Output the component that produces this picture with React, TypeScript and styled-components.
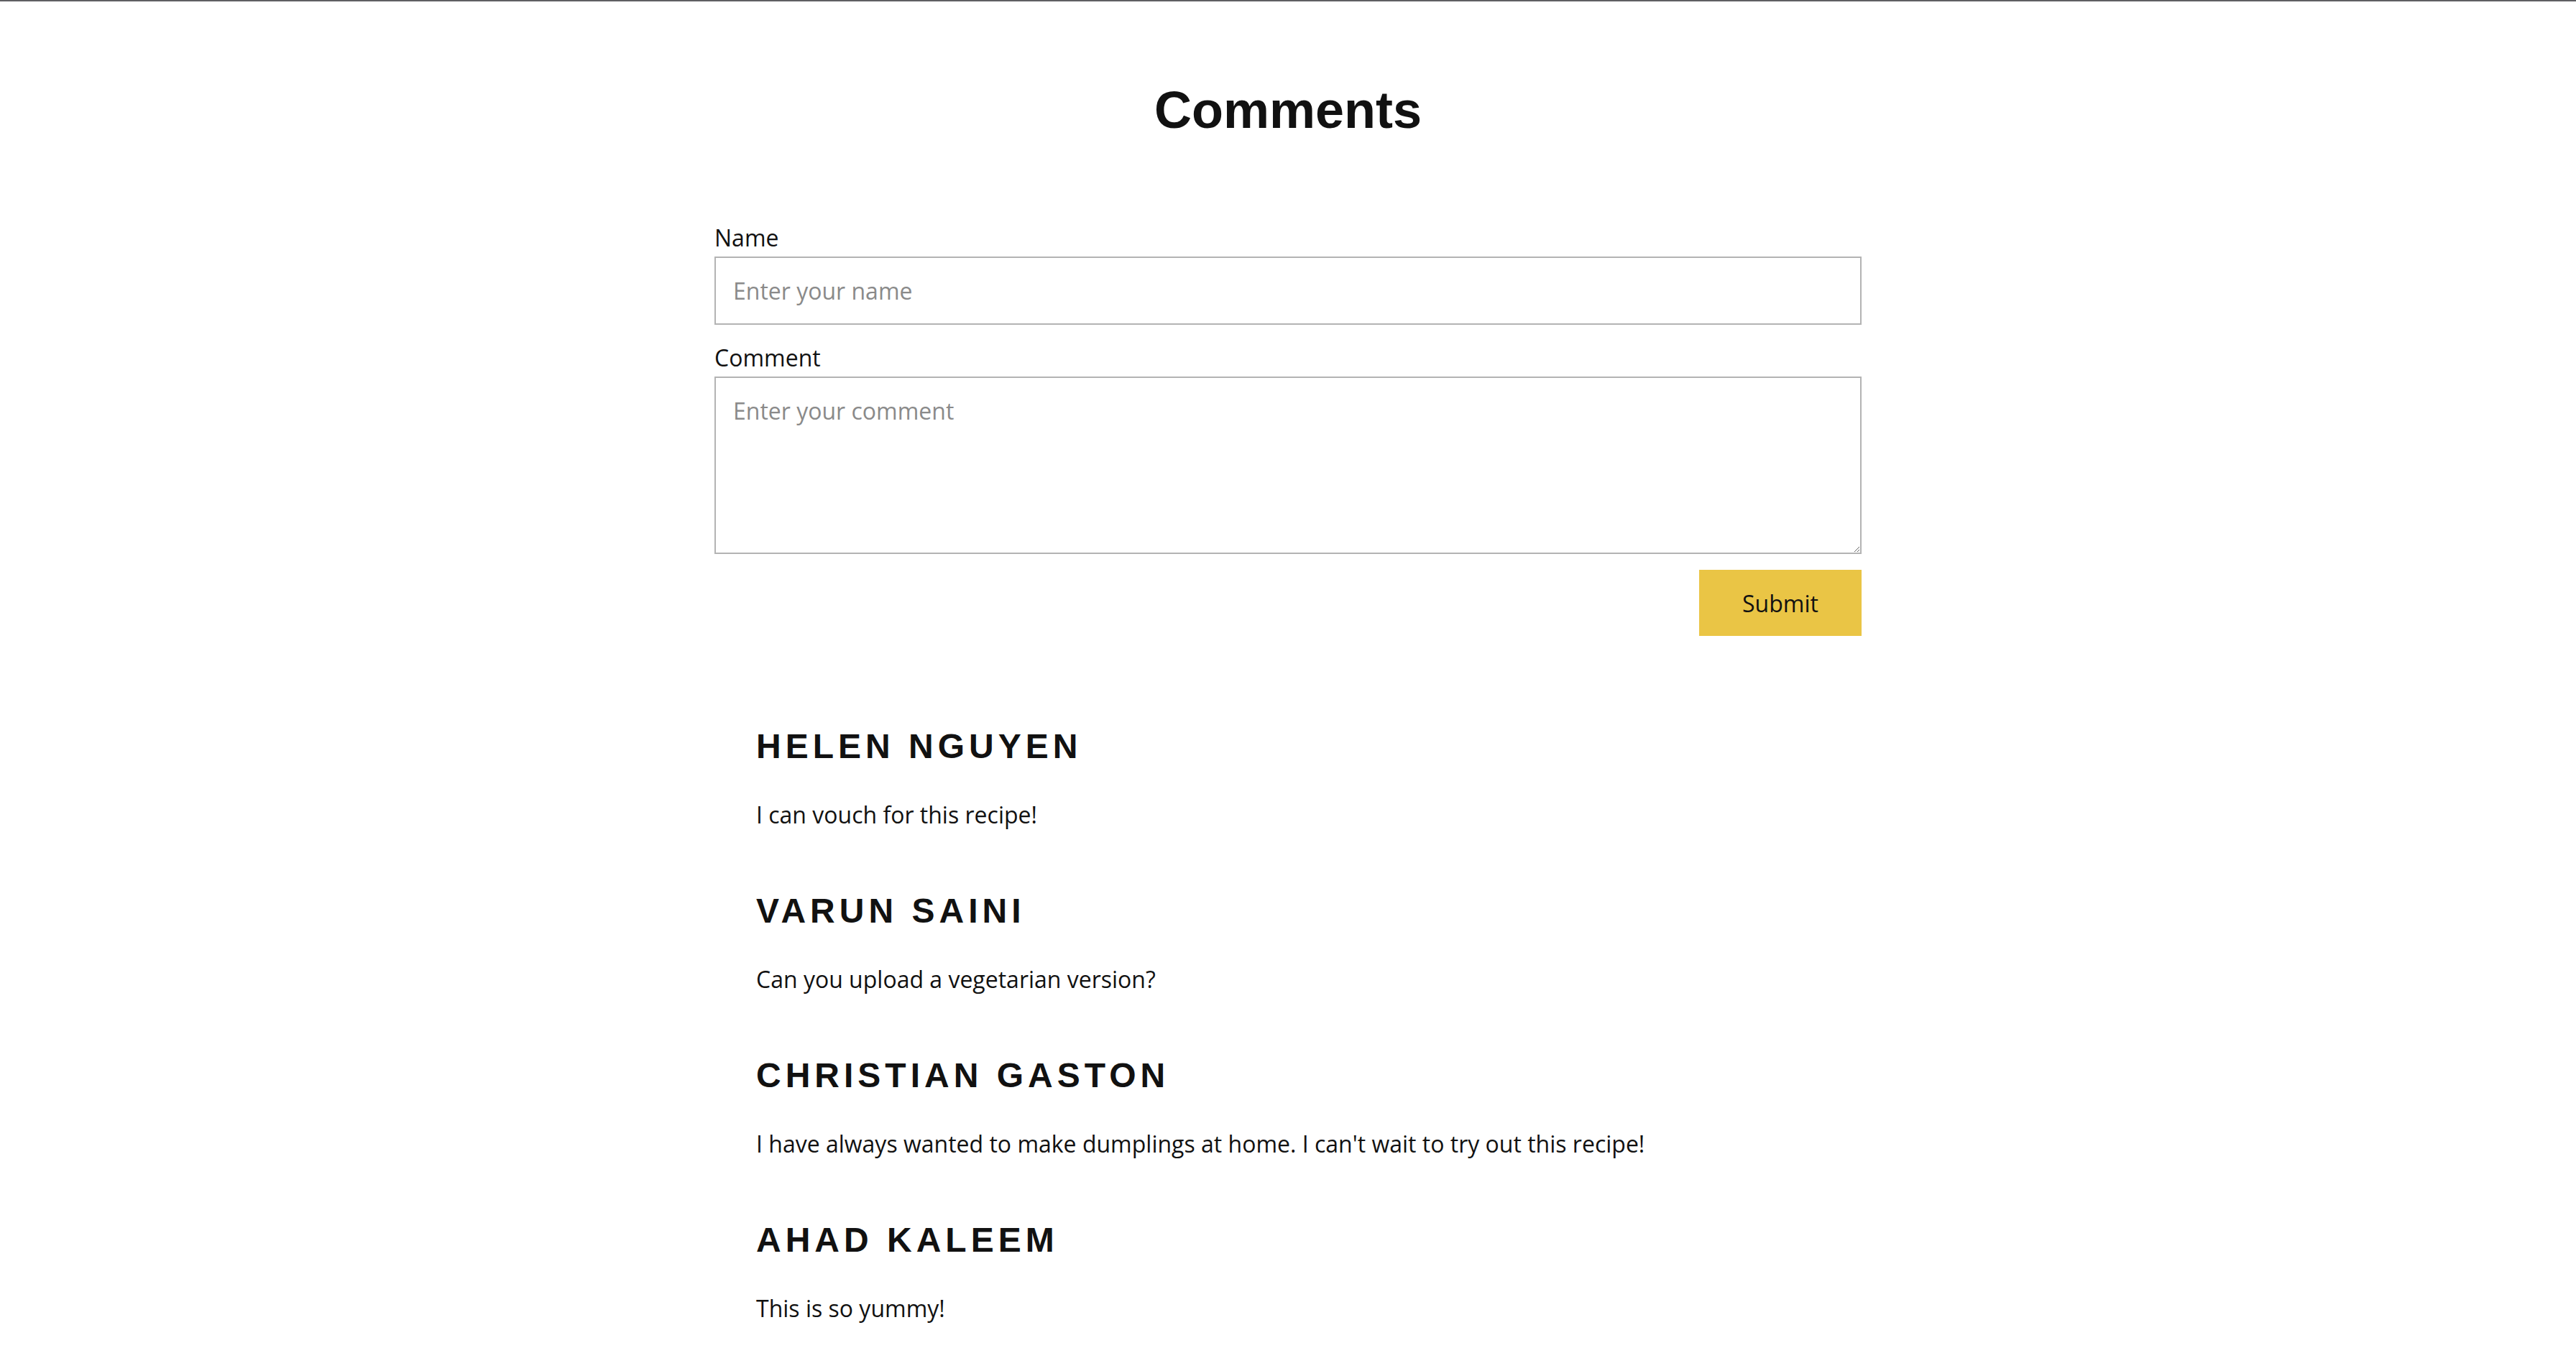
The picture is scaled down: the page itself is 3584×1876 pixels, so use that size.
import React from "react";
import styled, { createGlobalStyle } from "styled-components";

const comments = [
  { name: "Helen Nguyen", text: "I can vouch for this recipe!" },
  { name: "Varun Saini", text: "Can you upload a vegetarian version?" },
  {
    name: "Christian Gaston",
    text: "I have always wanted to make dumplings at home. I can't wait to try out this recipe!",
  },
  { name: "Ahad Kaleem", text: "This is so yummy!" },
];

function App() {
  return (
    <>
      <GlobalStyle />
      <Page>
        <Wrapper>
          <Title>Comments</Title>
          <Form onSubmit={(e) => e.preventDefault()}>
            <Field>
              <Label htmlFor="name">Name</Label>
              <Input id="name" type="text" placeholder="Enter your name" />
            </Field>
            <Field>
              <Label htmlFor="comment">Comment</Label>
              <TextArea id="comment" placeholder="Enter your comment" />
            </Field>
            <Actions>
              <SubmitButton type="submit">Submit</SubmitButton>
            </Actions>
          </Form>
          <CommentList>
            {comments.map((c) => (
              <CommentItem key={c.name}>
                <Author>{c.name}</Author>
                <Body>{c.text}</Body>
              </CommentItem>
            ))}
          </CommentList>
        </Wrapper>
      </Page>
    </>
  );
}

const GlobalStyle = createGlobalStyle`
  * {
    box-sizing: border-box;
  }

  body {
    margin: 0;
    background: #ffffff;
    color: #111111;
    font-family: "Open Sans", "Liberation Sans", sans-serif;
  }
`;

const Page = styled.div`
  min-height: 100vh;
  border-top: 2px solid #5f5f63;
`;

const Wrapper = styled.div`
  width: 1596px;
  margin: 0 auto;
`;

const Title = styled.h1`
  margin: 110px 0 0;
  font-family: "Liberation Sans", Arial, sans-serif;
  font-size: 72px;
  font-weight: 700;
  line-height: 83px;
  text-align: center;
  color: #111111;
`;

const Form = styled.form`
  display: flex;
  flex-direction: column;
  gap: 24px;
  margin-top: 114px;
`;

const Field = styled.div`
  display: flex;
  flex-direction: column;
`;

const Label = styled.label`
  margin-bottom: 4px;
  font-size: 32px;
  line-height: 44px;
  color: #111111;
`;

const fieldBase = `
  width: 100%;
  border: 2px solid #b3b3b3;
  border-radius: 0;
  font-family: "Open Sans", sans-serif;
  font-size: 32px;
  color: #111111;
  outline: none;

  &::placeholder {
    color: #8a8a8a;
  }
`;

const Input = styled.input`
  ${fieldBase}
  height: 95px;
  padding: 0 24px;
`;

const TextArea = styled.textarea`
  ${fieldBase}
  height: 247px;
  padding: 24px 24px;
  line-height: 44px;
  resize: vertical;
`;

const Actions = styled.div`
  display: flex;
  justify-content: flex-end;
  margin-top: -2px;
`;

const SubmitButton = styled.button`
  width: 226px;
  height: 92px;
  border: none;
  border-radius: 0;
  background: #eac545;
  font-family: "Open Sans", sans-serif;
  font-size: 32px;
  color: #111111;
  cursor: pointer;
`;

const CommentList = styled.ul`
  display: flex;
  flex-direction: column;
  gap: 84px;
  margin: 126px 0 0;
  padding: 0 0 0 58px;
  list-style: none;
`;

const CommentItem = styled.li`
  display: flex;
  flex-direction: column;
  gap: 45px;
`;

const Author = styled.h3`
  margin: 0;
  font-family: "Liberation Sans", Arial, sans-serif;
  font-size: 48px;
  font-weight: 700;
  line-height: 56px;
  letter-spacing: 6px;
  text-transform: uppercase;
  color: #111111;
`;

const Body = styled.p`
  margin: 0;
  font-size: 32px;
  line-height: 44px;
  color: #111111;
`;

export default App;
